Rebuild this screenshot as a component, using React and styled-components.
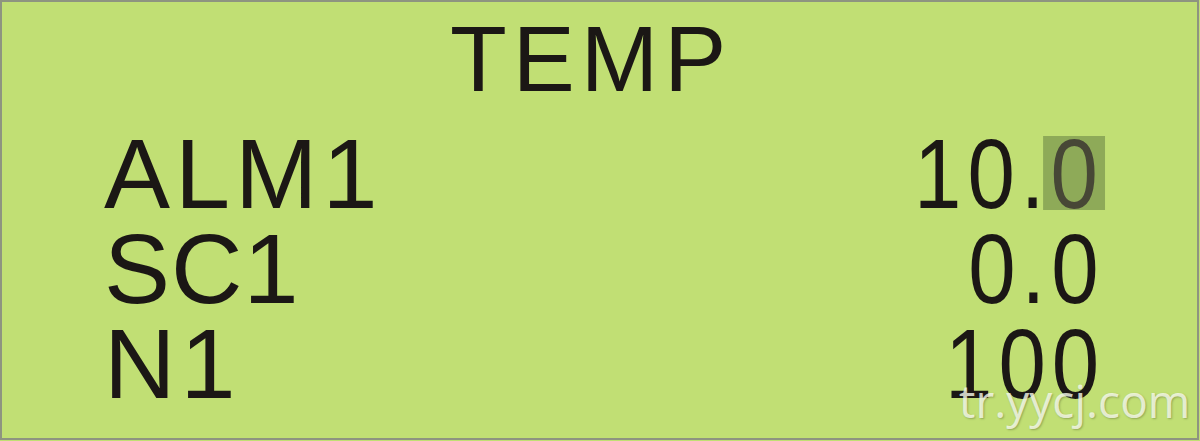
import React from "react";
import styled, { createGlobalStyle } from "styled-components";

const GlobalStyle = createGlobalStyle`
  html, body {
    margin: 0;
    padding: 0;
    background: #c1df74;
  }
  body {
    font-family: "Liberation Sans", Arial, sans-serif;
  }
`;

const Screen = styled.div`
  position: relative;
  box-sizing: border-box;
  width: 1199px;
  height: 440px;
  background: #c1df74;
  border: 2px solid #8e9480;
  color: #1b1715;
  font-family: "Liberation Sans", Arial, sans-serif;
  display: flex;
  flex-direction: column;
  overflow: hidden;
`;

const Title = styled.div`
  margin-top: 11px;
  padding-left: 448px;
  font-size: 93px;
  line-height: 93px;
  letter-spacing: 6px;
  white-space: nowrap;
`;

const Rows = styled.div`
  margin-top: 20px;
  display: flex;
  flex-direction: column;
  padding: 0 92px 0 102px;
`;

const Row = styled.div`
  display: flex;
  justify-content: space-between;
  align-items: baseline;
  font-size: 99px;
  line-height: 95px;
  height: 95px;
  white-space: nowrap;
`;

const Label = styled.span`
  letter-spacing: ${(p) => p.$spacing}px;
`;

/* LCD digits are narrower than the label glyphs */
const Value = styled.span`
  display: inline-block;
  letter-spacing: 7px;
  transform: scaleX(0.86);
  transform-origin: right center;
`;

const Cursor = styled.span`
  display: inline-block;
  width: 72px;
  height: 74px;
  line-height: 76px;
  text-align: center;
  letter-spacing: 0;
  margin-left: -8.5px;
  background: #8eaa58;
  color: #474736;
`;

const Watermark = styled.div`
  position: absolute;
  left: 957px;
  top: 375px;
  font-family: "Open Sans", "Noto Sans", sans-serif;
  font-size: 46px;
  line-height: 46px;
  color: rgba(250, 252, 240, 0.78);
  text-shadow: 1px 1px 2px rgba(60, 70, 30, 0.35);
  white-space: nowrap;
`;

const rows = [
  { label: "ALM1", spacing: 5, value: "10.", cursor: "0" },
  { label: "SC1", spacing: 1, value: "0.0" },
  { label: "N1", spacing: 5, value: "100" },
];

export default function App() {
  return (
    <>
      <GlobalStyle />
      <Screen>
        <Title>TEMP</Title>
        <Rows>
          {rows.map((r) => (
            <Row key={r.label}>
              <Label $spacing={r.spacing}>{r.label}</Label>
              <Value>
                {r.value}
                {r.cursor && <Cursor>{r.cursor}</Cursor>}
              </Value>
            </Row>
          ))}
        </Rows>
        <Watermark>tr.yycj.com</Watermark>
      </Screen>
    </>
  );
}
